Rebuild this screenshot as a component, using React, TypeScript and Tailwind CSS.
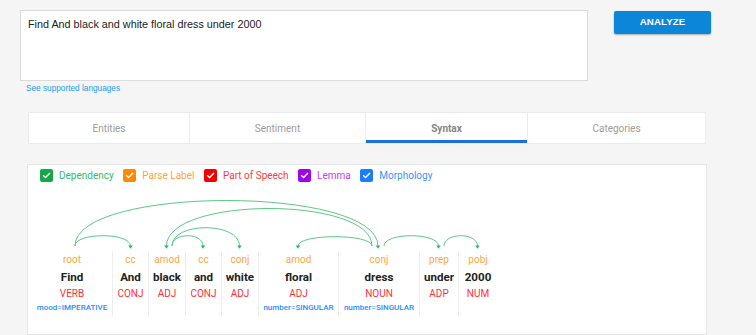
import React from "react";

type Col = { w: string; label: string; word: string; pos: string; morph?: string };

const cols: Col[] = [
  { w: "w-[80px]", label: "root", word: "Find", pos: "VERB", morph: "mood=IMPERATIVE" },
  { w: "w-[36px]", label: "cc", word: "And", pos: "CONJ" },
  { w: "w-[37px]", label: "amod", word: "black", pos: "ADJ" },
  { w: "w-[36px]", label: "cc", word: "and", pos: "CONJ" },
  { w: "w-[37px]", label: "conj", word: "white", pos: "ADJ" },
  { w: "w-[80px]", label: "amod", word: "floral", pos: "ADJ", morph: "number=SINGULAR" },
  { w: "w-[81px]", label: "conj", word: "dress", pos: "NOUN", morph: "number=SINGULAR" },
  { w: "w-[39px]", label: "prep", word: "under", pos: "ADP" },
  { w: "w-[39px]", label: "pobj", word: "2000", pos: "NUM" },
];

const checks = [
  { label: "Dependency", box: "bg-[#14a84b]", text: "text-[#2fbb6b]" },
  { label: "Parse Label", box: "bg-[#ff8a00]", text: "text-[#ffa23c]" },
  { label: "Part of Speech", box: "bg-[#f40000]", text: "text-[#ff3a3a]" },
  { label: "Lemma", box: "bg-[#a000e6]", text: "text-[#c23cf0]" },
  { label: "Morphology", box: "bg-[#1a7dfd]", text: "text-[#3a94ff]" },
];

// page coords -> svg coords (svg origin at page x=28, y=182)
const OX = 28;
const OY = 182;
const Y0 = 246;

const arcs: [number, number, number][] = [
  [75, 130.5, 235.7],
  [75, 378, 200.5],
  [372, 166.5, 208.5],
  [172, 203, 235.7],
  [172, 239.5, 227.7],
  [372, 298, 236.7],
  [384, 438.5, 235.7],
  [444, 477.5, 235.7],
];

function Arcs() {
  return (
    <svg width="678" height="70" className="block" viewBox="0 0 678 70">
      {arcs.map(([x1, x2, top], i) => {
        const c = Y0 - (Y0 - top) / 0.75;
        const a = x1 - OX;
        const b = x2 - OX;
        const y0 = Y0 - OY;
        const cy = c - OY;
        return (
          <g key={i}>
            <path
              d={`M ${a} ${y0} C ${a} ${cy}, ${b} ${cy}, ${b} ${y0}`}
              fill="none"
              stroke="#5cc886"
              strokeWidth="1"
            />
            <polygon
              points={`${b - 2.3},${y0 - 0.5} ${b + 2.3},${y0 - 0.5} ${b},${y0 + 2.8}`}
              fill="#2fb866"
            />
          </g>
        );
      })}
    </svg>
  );
}

function Check({ box }: { box: string }) {
  return (
    <span className={`w-[13px] h-[13px] rounded-[2px] ${box} flex items-center justify-center shrink-0`}>
      <svg width="9" height="9" viewBox="0 0 10 10">
        <path d="M1.8 5.2 L4 7.3 L8.3 2.8" fill="none" stroke="white" strokeWidth="1.6" strokeLinecap="square" />
      </svg>
    </span>
  );
}

export default function App() {
  return (
    <div className="h-[335px] overflow-hidden bg-[#f5f5f5] flex flex-col">
      <div className="pt-[10px] flex items-start">
        <div
          className="ml-[20px] w-[568px] h-[71px] border border-[#dcdcdc] bg-white px-[7px] pt-[7px] text-[10.8px] leading-[13px] text-[#222]"
          style={{ fontFamily: '"Liberation Sans", Arial, sans-serif' }}
        >
          Find And black and white floral dress under 2000
        </div>
        <div
          className="ml-[26px] mt-[1px] w-[97px] h-[23px] bg-[#0b86d9] rounded-[2px] shadow-[0_1px_2px_rgba(0,0,0,0.3)] flex items-center justify-center text-white font-bold text-[9.7px] tracking-[0.1px]"
          style={{ fontFamily: '"Liberation Sans", Arial, sans-serif' }}
        >
          ANALYZE
        </div>
      </div>
      <div
        className="mt-[2px] ml-[26px] text-[8.25px] leading-[12px] text-[#1f9be8]"
        style={{ fontFamily: '"Liberation Sans", Arial, sans-serif' }}
      >
        See supported languages
      </div>
      <div
        className="mt-[17px] ml-[28px] w-[678px] h-[32px] flex text-[10px]"
        style={{ fontFamily: "Roboto, sans-serif" }}
      >
        <div className="w-[162px] bg-white border border-[#ececec] flex items-center justify-center text-[#9b9b9b]">Entities</div>
        <div className="w-[176px] bg-white border-y border-r border-[#ececec] flex items-center justify-center text-[#9b9b9b]">Sentiment</div>
        <div className="w-[162px] bg-white border-y border-r border-[#ececec] flex items-center justify-center text-[#858585] font-bold shadow-[inset_0_-3px_0_#1a6fdc]">Syntax</div>
        <div className="w-[178px] bg-white border-y border-r border-[#ececec] flex items-center justify-center text-[#9b9b9b]">Categories</div>
      </div>
      <div
        className="mt-[20px] ml-[27px] w-[680px] flex-1 bg-white border border-[#e6e6e6]"
        style={{ fontFamily: "Roboto, sans-serif" }}
      >
        <div className="pt-[4px] pl-[12px] h-[17px] flex items-center gap-[9.5px] text-[10px] leading-[13px]">
          {checks.map((c) => (
            <div key={c.label} className="flex items-center gap-[6px]">
              <Check box={c.box} />
              <span className={c.text}>{c.label}</span>
            </div>
          ))}
        </div>
        <Arcs />
        <div className="ml-[4px] flex">
          {cols.map((c, i) => (
            <div
              key={i}
              className={`${c.w} shrink-0 flex flex-col items-center pb-[1px] ${i > 0 ? "border-l border-[#eeeeee]" : ""}`}
            >
              <div className="h-[16px] leading-[16px] text-[10px] text-[#ffa53c] whitespace-nowrap">{c.label}</div>
              <div className="h-[19px] leading-[19px] text-[11.6px] font-bold text-[#222] whitespace-nowrap">{c.word}</div>
              <div className="h-[14px] leading-[14px] text-[10px] text-[#ff2e3a] whitespace-nowrap">{c.pos}</div>
              <div className="h-[14px] leading-[14px] text-[8px] font-medium text-[#2b8cff] whitespace-nowrap">{c.morph ?? ""}</div>
            </div>
          ))}
        </div>
      </div>
    </div>
  );
}
